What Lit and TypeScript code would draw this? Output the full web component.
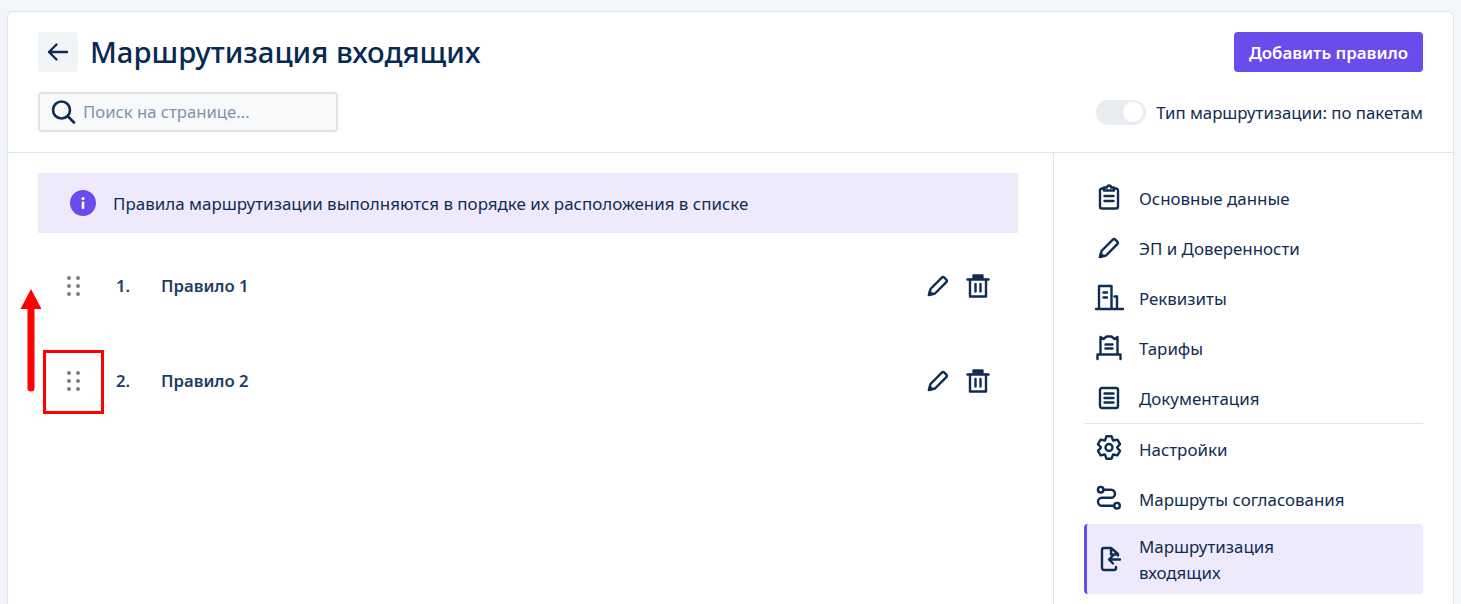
import { LitElement, html, css, svg } from "lit";
import { customElement } from "lit/decorators.js";

const icon = (body: unknown) => html`<svg class="ic" viewBox="0 0 24 24" width="24" height="24" fill="none" stroke="#0f2d52" stroke-width="2.4" stroke-linecap="round" stroke-linejoin="round">${body}</svg>`;

const gearPath = (() => {
  const pts: string[] = [];
  for (let k = 0; k < 6; k++) {
    const a = (k * Math.PI) / 3 - Math.PI / 2;
    const at = (r: number, d: number) => `${(12 + r * Math.cos(a + d)).toFixed(2)} ${(10.500 + r * Math.sin(a + d)).toFixed(2)}`;
    pts.push(at(8.200, -0.500), at(11.500, -0.230), at(11.500, 0.230), at(8.200, 0.500));
  }
  return "M" + pts.join("L") + "Z";
})();

const pencil = svg`<path d="M4.500 15L15.800 3.700a1.800 1.800 0 0 1 2.500 0l2 2a1.800 1.800 0 0 1 0 2.500L9 19.500 3 21z"/><path d="M2.500 21.500l5-1.300-3.700-3.700z" fill="#0f2d52" stroke-width="1"/>`;
const nav = [
  { t: "Основные данные", i: svg`<path d="M7 2.500H5A2 2 0 0 0 3 4.500V20.500A2 2 0 0 0 5 22.500H19A2 2 0 0 0 21 20.500V4.500A2 2 0 0 0 19 2.500H17"/><path d="M7 4.500V1.500H10A2 2 0 0 1 14 1.500H17V4.500H7Z"/><path d="M7.500 10H16.500M7.500 15H16.500"/>` },
  { t: "ЭП и Доверенности", i: pencil },
  { t: "Реквизиты", i: svg`<path d="M2 23V0H14.500V23M-1 23H26M20 23V10.500H17.500"/><path d="M6.500 6.500H10M6.500 11.500H10"/>` },
  { t: "Тарифы", i: svg`<path d="M3.500 18V1L6.500 3 9.500 0.500H14.500L17.500 3 20.500 1V18"/><path d="M0.500 23V18.500H23.500V23"/><path d="M8.500 8.500H15.500M8.500 12.500H15.500"/>` },
  { t: "Документация", sep: true, i: svg`<rect x="3" y="2" width="18" height="20" rx="2"/><path d="M7.500 7.500H16.500M7.500 12H16.500M7.500 16.500H16.500"/>` },
  { t: "Настройки", i: svg`<circle cx="12" cy="10.500" r="3.500"/><path d="${gearPath}"/>` },
  { t: "Маршруты согласования", i: svg`<circle cx="3.700" cy="2.700" r="2.800"/><circle cx="20" cy="18.700" r="2.800"/><path d="M6.500 2.700H14A4 4 0 0 1 14 10.700H5A4 4 0 0 0 5 18.700H17.200"/>` },
];

@customElement("app-root")
export class AppRoot extends LitElement {
  static styles = css`
    :host { display: block; width: 1461px; height: 604px; overflow: hidden; background: #f2f5f9; font-family: "Noto Sans", "Open Sans", sans-serif; color: #0f2d52; position: relative; }
    svg.ic { overflow: visible; flex: none; }
    .page { padding: 11px 7px 0; }
    .card { background: #fff; border: 1px solid #e0e4ea; border-bottom: 0; border-radius: 6px 6px 0 0; height: 593px; box-sizing: border-box; display: flex; flex-direction: column; }
    .head { height: 141px; box-sizing: border-box; border-bottom: 1px solid #e0e4ea; padding: 20px 30px 0; display: flex; flex-direction: column; gap: 20px; flex: none; }
    .row { display: flex; align-items: center; justify-content: space-between; }
    .left { display: flex; align-items: center; gap: 12px; }
    .back { width: 40px; height: 40px; background: #f2f5f8; border-radius: 4px; display: flex; align-items: center; justify-content: center; }
    h1 { margin: 0; font-size: 29.250px; font-weight: 500; color: #082a52; line-height: 40px; }
    .add { height: 40px; width: 189px; background: #6a4bec; border-radius: 4px; color: #fff; font-weight: 600; font-size: 16.900px; display: flex; align-items: center; justify-content: center; }
    .search { width: 300px; height: 40px; box-sizing: border-box; background: #f8f9fb; border: 2px solid #dfe3ea; border-radius: 4px; display: flex; align-items: center; padding-left: 11px; gap: 8px; color: #8093ad; font-size: 16.700px; }
    .search span { position: relative; top: -1px; }
    .toggle { display: flex; align-items: center; gap: 10px; font-size: 16.800px; }
    .sw { width: 50px; height: 25px; border-radius: 13px; background: #e9ecf0; display: flex; justify-content: flex-end; align-items: center; padding-right: 3px; box-sizing: border-box; }
    .sw i { width: 20px; height: 20px; border-radius: 50%; background: #fff; display: block; }
    .body { display: flex; flex: 1; min-height: 0; }
    .main { width: 1046px; box-sizing: border-box; padding: 20px 35px 0 30px; border-right: 1px solid #e0e4ea; flex: none; }
    .banner { height: 60px; background: #eeeafc; display: flex; align-items: center; padding-left: 32px; gap: 17px; font-size: 16.950px; }
    .info { width: 26px; height: 26px; border-radius: 50%; background: #6a4bec; color: #fff; display: flex; align-items: center; justify-content: center; flex: none; }
    .rule { height: 95px; display: flex; align-items: center; padding-left: 29px; font-weight: 600; font-size: 16.700px; color: #1c3d66; }
    .rules { padding-top: 5px; }
    .dots { width: 13px; display: grid; grid-template-columns: 4px 4px; gap: 4px 5px; }
    .dots i { width: 4px; height: 4px; border-radius: 50%; background: #808080; display: block; }
    .num { margin-left: 36px; width: 45px; }
    .name { flex: 1; }
    .acts { display: flex; gap: 16px; padding-right: 28px; }
    aside { flex: 1; padding: 20px 30px 0; }
    .item { height: 50px; display: flex; align-items: center; gap: 18px; padding-left: 13px; font-size: 16.900px; box-sizing: border-box; }
    .item.sep { border-bottom: 1px solid #e0e4ea; height: 51px; }
    .active { height: 70px; background: #eeeafc; border-left: 3px solid #6a4bec; border-radius: 4px; padding-left: 10px; line-height: 26px; }
    .active span { padding-top: 2px; }
    .mark { position: absolute; left: 43px; top: 350px; width: 61px; height: 64px; box-sizing: border-box; border: 3px solid #f00; }
    .arrow { position: absolute; left: 20px; top: 288px; }
  `;
  render() {
    const rule = (n: number) => html`<div class="rule">
      <div class="dots">${[0,1,2,3,4,5].map(() => html`<i></i>`)}</div>
      <span class="num">${n}.</span><span class="name">Правило ${n}</span>
      <div class="acts">${icon(pencil)}${icon(svg`<path d="M1.500 5.500H22.500" /><path d="M7.500 4.500V1.500H16.500V4.500Z" fill="#0f2d52"/><path d="M4 5.500V22.500H20V5.500"/><path d="M9.500 10V17.500M14.500 10V17.500"/>`)}</div>
    </div>`;
    return html`<div class="page"><div class="card">
      <div class="head">
        <div class="row">
          <div class="left"><div class="back">${icon(svg`<path d="M21 12H3M10.500 4.500L3 12l7.500 7.500"/>`)}</div><h1>Маршрутизация входящих</h1></div>
          <div class="add">Добавить правило</div>
        </div>
        <div class="row">
          <div class="search">${icon(svg`<circle cx="10.500" cy="10" r="8.500" stroke-width="2.600"/><path d="M17 16.500l6 6" stroke-width="2.600"/>`)}<span>Поиск на странице...</span></div>
          <div class="toggle"><div class="sw"><i></i></div>Тип маршрутизации: по пакетам</div>
        </div>
      </div>
      <div class="body">
        <div class="main">
          <div class="banner"><div class="info"><svg width="26" height="26" viewBox="0 0 26 26"><circle cx="13" cy="8.500" r="1.600" fill="#fff"/><rect x="11.700" y="11.500" width="2.600" height="7.500" rx="1" fill="#fff"/></svg></div>Правила маршрутизации выполняются в порядке их расположения в списке</div>
          <div class="rules">${rule(1)}${rule(2)}</div>
        </div>
        <aside>
          ${nav.map((n) => html`<div class="item ${n.sep ? "sep" : ""}">${icon(n.i)}<span>${n.t}</span></div>`)}
          <div class="item active">${icon(svg`<path d="M19 20V21A2 2 0 0 1 17 23H7A2 2 0 0 1 5 21V3A2 2 0 0 1 7 1H14L21 7V8.500M14 1.500V7.500H20"/><path d="M23 12.500H12M16 8.500L12 12.500L16 16.500"/>`)}<span>Маршрутизация<br />входящих</span></div>
        </aside>
      </div>
    </div></div>
    <div class="mark"></div>
    <svg class="arrow" width="22" height="106" viewBox="0 0 22 106"><path d="M11 20V100" stroke="#f00" stroke-width="7" stroke-linecap="round"/><path d="M11 1L21.500 21H.5Z" fill="#f00"/></svg>`;
  }
}
